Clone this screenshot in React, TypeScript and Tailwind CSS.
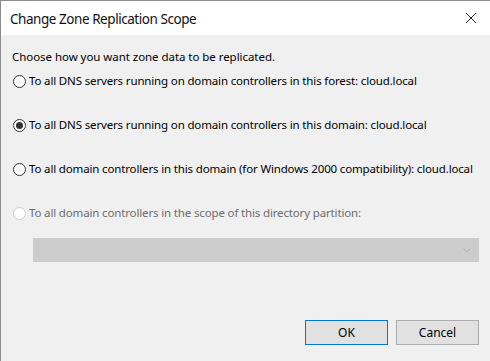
import { useState } from 'react';

const FONT = { fontFamily: '"Noto Sans", "Open Sans", sans-serif' };

const options = [
  'To all DNS servers running on domain controllers in this forest: cloud.local',
  'To all DNS servers running on domain controllers in this domain: cloud.local',
  'To all domain controllers in this domain (for Windows 2000 compatibility): cloud.local',
];

function Radio({ checked, disabled }: { checked?: boolean; disabled?: boolean }) {
  return (
    <span
      className={`flex h-[13px] w-[13px] shrink-0 items-center justify-center rounded-full border bg-white ${
        disabled ? 'border-[#cccccc]' : 'border-[#333333]'
      }`}
    >
      {checked && <span className="h-[7px] w-[7px] rounded-full bg-[#333333]" />}
    </span>
  );
}

export default function App() {
  const [scope, setScope] = useState(1);

  return (
    <div
      className="flex h-[361px] w-[490px] flex-col overflow-hidden border-l border-t border-[#8c8c8c] bg-[#f0f0f0] text-[11.5px] text-black"
      style={FONT}
    >
      <div className="flex h-[34px] shrink-0 items-center justify-between bg-white pl-[9px] pr-[13px]">
        <span className="mt-[4px] text-[13.5px] leading-none tracking-[-0.45px] text-[#111]">
          Change Zone Replication Scope
        </span>
        <svg width="12" height="12" viewBox="0 0 12 12" className="text-[#222]">
          <path d="M1 1L11 11M11 1L1 11" stroke="currentColor" strokeWidth="1" fill="none" />
        </svg>
      </div>

      <div className="flex flex-1 flex-col pl-[11px] pt-[14px]">
        <p className="leading-[16px] tracking-[-0.05px]">Choose how you want zone data to be replicated.</p>

        <div className="mt-[8px] flex flex-col gap-[28px] tracking-[-0.15px]">
          {options.map((label, i) => (
            <label
              key={label}
              className="flex h-[16px] cursor-default items-center gap-[3px] whitespace-nowrap pl-[1px]"
              onClick={() => setScope(i)}
            >
              <Radio checked={scope === i} />
              <span className="leading-[16px]">{label}</span>
            </label>
          ))}
          <div className="flex h-[16px] items-center gap-[3px] whitespace-nowrap pl-[1px] text-[#6d6d6d]">
            <Radio disabled />
            <span className="leading-[16px]">
              To all domain controllers in the scope of this directory partition:
            </span>
          </div>
        </div>

        <div className="ml-[21px] mt-[17px] flex h-[24px] w-[446px] items-center justify-end bg-[#cccccc] pr-[8px]">
          <svg width="8" height="5" viewBox="0 0 8 5">
            <path d="M0.5 0.5L4 4L7.5 0.5" stroke="#b0b0b0" strokeWidth="1" fill="none" />
          </svg>
        </div>

        <div className="mt-auto flex justify-end gap-[8px] pb-[16px] pr-[11px]">
          <button className="h-[25px] w-[83px] border border-[#0078d7] bg-[#e1e1e1] text-[12px] text-black">
            OK
          </button>
          <button className="h-[25px] w-[83px] border border-[#adadad] bg-[#e1e1e1] text-[12px] text-black">
            Cancel
          </button>
        </div>
      </div>
    </div>
  );
}
